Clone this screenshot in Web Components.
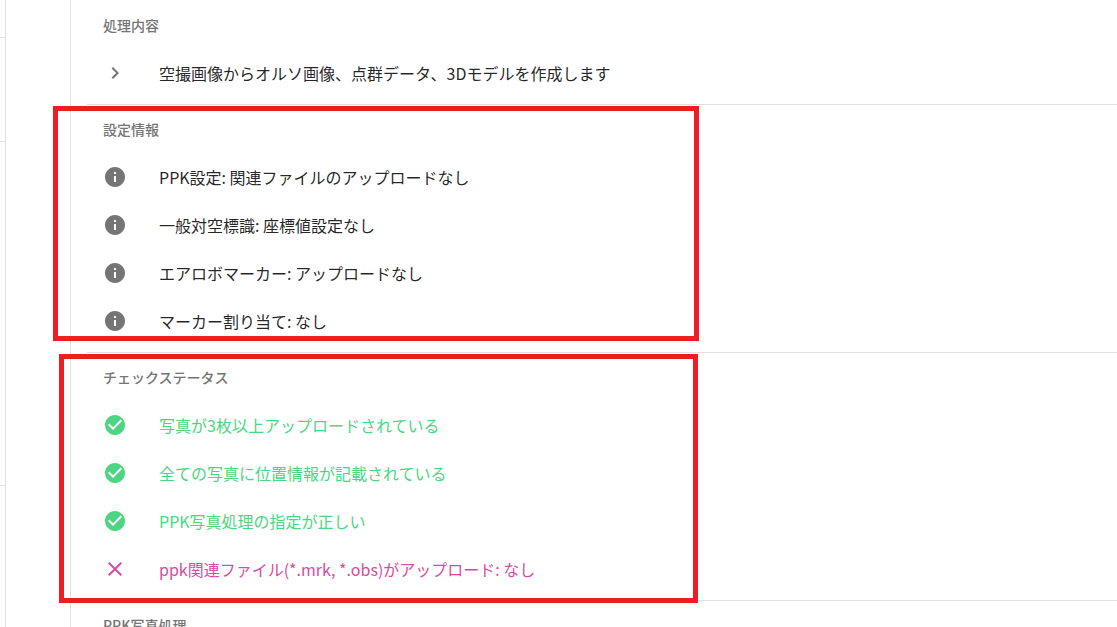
<!DOCTYPE html>
<html lang="ja">
<head>
<meta charset="utf-8">
<meta name="viewport" content="width=device-width, initial-scale=1">
<title>処理内容</title>
<style>
html, body { height: 100%; }
body { margin: 0; overflow: hidden; background: #fff; font-family: "Noto Sans CJK JP", sans-serif; color: rgba(0, 0, 0, .87); }
</style>
</head>
<body>
<app-shell>
  <side-rail slot="side"></side-rail>
  <info-section label="処理内容">
    <info-row icon="chevron">空撮画像からオルソ画像、点群データ、3Dモデルを作成します</info-row>
  </info-section>
  <info-section label="設定情報">
    <info-row icon="info">PPK設定: 関連ファイルのアップロードなし</info-row>
    <info-row icon="info">一般対空標識: 座標値設定なし</info-row>
    <info-row icon="info">エアロボマーカー: アップロードなし</info-row>
    <info-row icon="info">マーカー割り当て: なし</info-row>
    <mark-frame slot="mark" class="settings"></mark-frame>
  </info-section>
  <info-section label="チェックステータス">
    <info-row icon="check">写真が3枚以上アップロードされている</info-row>
    <info-row icon="check">全ての写真に位置情報が記載されている</info-row>
    <info-row icon="check">PPK写真処理の指定が正しい</info-row>
    <info-row icon="cross">ppk関連ファイル(*.mrk, *.obs)がアップロード: なし</info-row>
    <mark-frame slot="mark" class="status"></mark-frame>
  </info-section>
  <info-section label="PPK写真処理"></info-section>
</app-shell>

<script>
class AppShell extends HTMLElement {
  constructor() {
    super();
    this.attachShadow({ mode: 'open' }).innerHTML = `
      <style>
        :host { display: flex; height: 100%; overflow: hidden; }
        main { flex: 1; min-width: 0; margin-left: 64px; padding: 1px 0 0 16px; border-left: 1px solid #e0e0e0; }
      </style>
      <slot name="side"></slot>
      <main><slot></slot></main>`;
  }
}

class SideRail extends HTMLElement {
  constructor() {
    super();
    this.attachShadow({ mode: 'open' }).innerHTML = `
      <style>
        :host { display: block; flex: none; width: 5px; border-right: 1px solid #e0e0e0; }
        div { box-sizing: border-box; border-bottom: 1px solid #e0e0e0; height: 104px; }
        .head { height: 38px; }
        .body { height: 344px; }
      </style>
      <div class="head"></div><div></div><div class="body"></div>`;
  }
}

class InfoSection extends HTMLElement {
  constructor() {
    super();
    this.attachShadow({ mode: 'open' }).innerHTML = `
      <style>
        :host { display: block; position: relative; padding-bottom: 7px; border-bottom: 1px solid #e0e0e0; }
        h2 { margin: 0; padding-left: 16px; font-size: 14px; font-weight: 500; line-height: 48px; color: #757575; }
      </style>
      <h2></h2>
      <slot></slot>
      <slot name="mark"></slot>`;
  }
  connectedCallback() {
    this.shadowRoot.querySelector('h2').textContent = this.getAttribute('label');
  }
}

const ICONS = {
  chevron: 'M10 6L8.59 7.41 13.17 12l-4.58 4.59L10 18l6-6z',
  info: 'M12 2C6.48 2 2 6.48 2 12s4.48 10 10 10 10-4.48 10-10S17.52 2 12 2zm1 15h-2v-6h2v6zm0-8h-2V7h2v2z',
  check: 'M12 2C6.48 2 2 6.48 2 12s4.48 10 10 10 10-4.48 10-10S17.52 2 12 2zm-2 15l-5-5 1.41-1.41L10 14.17l7.59-7.59L19 8l-9 9z',
  cross: 'M19 6.41L17.59 5 12 10.59 6.41 5 5 6.41 10.59 12 5 17.59 6.41 19 12 13.41 17.59 19 19 17.59 13.41 12z'
};

class InfoRow extends HTMLElement {
  constructor() {
    super();
    const icon = this.getAttribute('icon');
    const tag = icon === 'chevron' ? 'button' : 'div';
    const attrs = icon === 'chevron' ? 'type="button" aria-expanded="false"' : '';
    this.attachShadow({ mode: 'open' }).innerHTML = `
      <style>
        :host { display: block; --icon: #757575; }
        :host([icon="check"]) { color: #4cd681; --icon: #4cd681; }
        :host([icon="cross"]) { color: #d84ba0; --icon: #d84ba0; }
        .row { display: flex; align-items: center; gap: 32px; box-sizing: border-box; width: 100%; height: 48px;
          margin: 0; padding: 0 16px; border: 0; background: none; font: inherit; font-size: 16px; line-height: 24px;
          color: inherit; text-align: left; }
        button { cursor: pointer; }
        svg { flex: none; width: 24px; height: 24px; fill: var(--icon); }
      </style>
      <${tag} class="row" ${attrs}>
        <svg viewBox="0 0 24 24" aria-hidden="true"><path d="${ICONS[icon]}"/></svg>
        <span><slot></slot></span>
      </${tag}>`;
  }
}

/* Red outline drawn over a section to call attention to it. */
class MarkFrame extends HTMLElement {
  constructor() {
    super();
    this.attachShadow({ mode: 'open' }).innerHTML = `
      <style>
        :host { display: block; position: absolute; z-index: 1; top: 1px; box-sizing: border-box;
          border: 5px solid #f01c24; pointer-events: none; }
        :host(.settings) { left: -34px; width: 646px; height: 235px; }
        :host(.status) { left: -28px; width: 639px; height: 249px; }
      </style>`;
  }
}

customElements.define('app-shell', AppShell);
customElements.define('side-rail', SideRail);
customElements.define('info-section', InfoSection);
customElements.define('info-row', InfoRow);
customElements.define('mark-frame', MarkFrame);
</script>
</body>
</html>
